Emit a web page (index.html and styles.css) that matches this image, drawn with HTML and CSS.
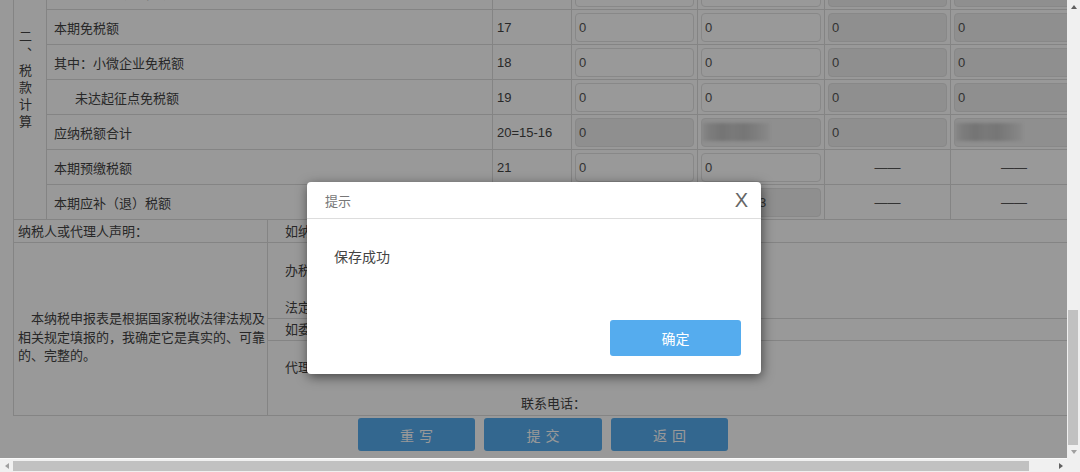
FILE: index.html
```html
<!DOCTYPE html>
<html lang="zh-CN">
<head>
<meta charset="utf-8">
<title>增值税纳税申报表</title>
<link rel="stylesheet" href="styles.css">
</head>
<body>
<div class="window">
  <div class="viewport">
    <div class="page">
      <table class="calc">
        <colgroup>
          <col class="c-sec"><col class="c-item"><col class="c-no"><col class="c-v"><col class="c-v2"><col class="c-v"><col class="c-v2">
        </colgroup>
        <tr>
          <td class="sec" rowspan="8"><div class="vtext">二、税款计算</div></td>
          <td class="item">本期应纳税额</td><td class="no">15</td>
          <td><div class="field">0</div></td><td><div class="field">0</div></td><td><div class="field ro">0</div></td><td><div class="field ro">0</div></td>
        </tr>
        <tr>
          <td class="item">本期应纳税额减征额</td><td class="no">16</td>
          <td><div class="field">0</div></td><td><div class="field">0</div></td><td><div class="field ro">0</div></td><td><div class="field ro">0</div></td>
        </tr>
        <tr>
          <td class="item">本期免税额</td><td class="no">17</td>
          <td><div class="field">0</div></td><td><div class="field">0</div></td><td><div class="field ro">0</div></td><td><div class="field ro">0</div></td>
        </tr>
        <tr>
          <td class="item">其中<span class="c">：</span>小微企业免税额</td><td class="no">18</td>
          <td><div class="field">0</div></td><td><div class="field">0</div></td><td><div class="field ro">0</div></td><td><div class="field ro">0</div></td>
        </tr>
        <tr>
          <td class="item sub">未达起征点免税额</td><td class="no">19</td>
          <td><div class="field">0</div></td><td><div class="field">0</div></td><td><div class="field ro">0</div></td><td><div class="field ro">0</div></td>
        </tr>
        <tr>
          <td class="item">应纳税额合计</td><td class="no">20=15-16</td>
          <td><div class="field ro">0</div></td><td><div class="field ro blur"><span class="mosaic"></span></div></td><td><div class="field ro">0</div></td><td><div class="field ro blur"><span class="mosaic"></span></div></td>
        </tr>
        <tr>
          <td class="item">本期预缴税额</td><td class="no">21</td>
          <td><div class="field">0</div></td><td><div class="field">0</div></td><td class="dash">——</td><td class="dash">——</td>
        </tr>
        <tr>
          <td class="item">本期应补<span class="c">（</span>退<span class="c">）</span>税额</td><td class="no">22=20-21</td>
          <td><div class="field ro">0</div></td><td><div class="field ro blur"><span class="mosaic short"></span>3</div></td><td class="dash">——</td><td class="dash">——</td>
        </tr>
      </table>

      <table class="decl">
        <colgroup><col class="d-left"><col class="d-right"></colgroup>
        <tr class="d-head first">
          <td>纳税人或代理人声明<span class="c">：</span></td>
          <td class="right">如纳税人填报，由纳税人填写以下各栏<span class="c">：</span></td>
        </tr>
        <tr class="d-sign">
          <td class="stmt" rowspan="3"><p>本纳税申报表是根据国家税收法律法规及相关规定填报的，我确定它是真实的、可靠的、完整的。</p></td>
          <td class="right sign"><p>办税人员<span class="c">：</span></p><p class="second">法定代表人<span class="c">：</span></p></td>
        </tr>
        <tr class="d-head">
          <td class="right">如委托代理人填报，由代理人填写以下各栏<span class="c">：</span></td>
        </tr>
        <tr class="d-sign">
          <td class="right agent"><p>代理人名称<span class="c">（</span>公章<span class="c">）：</span></p><p class="phone">联系电话<span class="c">：</span></p></td>
        </tr>
      </table>

      <div class="actions">
        <button class="btn" type="button">重写</button>
        <button class="btn" type="button">提交</button>
        <button class="btn" type="button">返回</button>
      </div>
    </div>

    <div class="mask"></div>
    <div class="dialog">
      <div class="dlg-head">
        <span class="dlg-title">提示</span>
        <span class="dlg-close">X</span>
      </div>
      <div class="dlg-body">保存成功</div>
      <div class="dlg-foot"><button class="dlg-ok" type="button">确定</button></div>
    </div>
  </div>

  <div class="vbar">
    <div class="sb-btn"><span class="arr up"></span></div>
    <div class="vtrack"><div class="vthumb"></div></div>
    <div class="sb-btn"><span class="arr down"></span></div>
  </div>

  <div class="hbar">
    <div class="sb-btn"><span class="arr left"></span></div>
    <div class="htrack"><div class="hthumb"></div></div>
    <div class="sb-btn"><span class="arr right"></span></div>
  </div>
  <div class="corner"></div>
</div>
</body>
</html>
```

FILE: styles.css
```css
* { box-sizing: border-box; }
html, body { margin: 0; padding: 0; }
body {
  font-family: "Liberation Sans", "Noto Sans CJK SC", sans-serif;
  font-size: 13px;
  color: #444;
  background: #fff;
}
/* full-width punctuation centred in its em box, as in the original UI font */
.c { font-family: "Noto Sans CJK JP", "Noto Sans CJK SC", sans-serif; }

.window {
  display: grid;
  grid-template-columns: 1067px 13px;
  grid-template-rows: 458px 14px;
  width: 1080px;
  height: 472px;
  overflow: hidden;
}

.viewport {
  position: relative;
  overflow: hidden;
  background: #fff;
}

.page {
  padding-left: 13px;
  width: 1093px;
}

table {
  border-collapse: collapse;
  table-layout: fixed;
  width: 1064px;
}
td {
  border: 1px solid #ddd;
  padding: 0;
  vertical-align: middle;
}

/* upper table (scrolled: its first rows lie above the viewport) */
.calc { margin-top: -61px; }
.c-sec { width: 33px; }
.c-item { width: 446px; }
.c-no { width: 79px; }
.c-v { width: 126px; }
.c-v2 { width: 127px; }

.calc td { height: 35px; }
.calc .item { padding-left: 7px; }
.calc .item.sub { padding-left: 28px; }
.calc .no { padding-left: 4px; }

.sec { padding: 3px 0 0 3px; }
.vtext {
  writing-mode: vertical-rl;
  line-height: 14px;
  letter-spacing: 4px;
  font-size: 13px;
}

.field {
  height: 29px;
  margin: 0 3px;
  border: 1px solid #e3e3e3;
  border-radius: 4px;
  background: #fff;
  padding: 0 3px;
  line-height: 27px;
  color: #555;
  font-size: 13px;
  white-space: nowrap;
  overflow: hidden;
}
.field.ro { background: #eee; }
.field.blur { padding-left: 0; display: flex; align-items: center; }

.mosaic {
  display: inline-block;
  width: 68px;
  height: 18px;
  background: linear-gradient(90deg, #e2e2e2 0, #cfcfcf 12%, #c2c2c2 30%, #cbcbcb 45%, #c4c4c4 62%, #d2d2d2 80%, #e6e6e6 100%);
  filter: blur(1.5px);
}
.mosaic.short { width: 56px; margin-right: 1px; }

.dash { text-align: center; color: #555; }

/* declaration table */
.decl { margin-top: -1px; }
.d-left { width: 254px; }
.d-right { width: 810px; }
.decl td { vertical-align: top; }
.decl .d-head td { height: 22px; line-height: 20px; padding-left: 4px; vertical-align: middle; }
.decl .d-head.first td { height: 23px; }
.decl .d-head td.right { padding-left: 17px; }
.decl .right { padding-left: 17px; }
.decl p { margin: 0; }

.stmt { padding: 67px 1px 0 4px; }
.stmt p { line-height: 18.5px; text-indent: 1em; }

.d-sign td.sign, .d-sign td.agent { height: 75px; }
.sign { padding-top: 17px; }
.sign p { line-height: 20px; }
.sign .second { margin-top: 16px; }
.agent { padding-top: 16px; }
.agent p { line-height: 20px; }
.agent .phone { margin-top: 15px; padding-left: 236px; }

/* action buttons */
.actions {
  width: 1060px;
  display: flex;
  justify-content: center;
  gap: 9px;
  padding-top: 2px;
}
.btn {
  width: 117px;
  height: 33px;
  border: 0;
  border-radius: 3px;
  background: #55acee;
  color: #fff;
  font-family: "Liberation Sans", "Noto Sans CJK SC", sans-serif;
  font-size: 14px;
  letter-spacing: 5px;
  padding: 0 0 0 5px;
}
.btn:nth-child(2) { width: 118px; }

/* modal */
.mask {
  position: absolute;
  inset: 0;
  background: rgba(0, 0, 0, 0.4);
}
.dialog {
  position: absolute;
  left: 307px;
  top: 182px;
  width: 454px;
  height: 192px;
  background: #fff;
  border-radius: 4px;
  box-shadow: 1px 3px 12px rgba(0, 0, 0, 0.55);
  display: flex;
  flex-direction: column;
}
.dlg-head {
  height: 37px;
  border-bottom: 1px solid #ddd;
  display: flex;
  align-items: center;
  justify-content: space-between;
  padding: 0 13px 0 18px;
}
.dlg-title { font-size: 13px; color: #777; }
.dlg-close { font-size: 20px; color: #666; line-height: 20px; }
.dlg-body {
  flex: 1;
  padding: 28px 27px 0;
  font-size: 14px;
  line-height: 20px;
  color: #444;
}
.dlg-foot {
  display: flex;
  justify-content: flex-end;
  padding: 0 20px 18px;
}
.dlg-ok {
  width: 131px;
  height: 36px;
  border: 0;
  border-radius: 3px;
  background: #55acee;
  color: #fff;
  font-family: "Liberation Sans", "Noto Sans CJK SC", sans-serif;
  font-size: 14px;
}

/* scrollbars */
.vbar {
  background: #f0f0f0;
  display: flex;
  flex-direction: column;
}
.vbar .sb-btn { height: 13px; display: flex; align-items: center; justify-content: center; }
.vbar .sb-btn:first-child { height: 14px; }
.vtrack { flex: 1; display: flex; flex-direction: column; justify-content: flex-end; }
.vthumb { height: 135px; margin: 0 2px 0 1px; background: #c1c1c1; }

.hbar {
  background: #f0f0f0;
  border-top: 1px solid #fafafa;
  display: flex;
}
.hbar .sb-btn { width: 13px; display: flex; align-items: center; justify-content: center; }
.htrack { flex: 1; display: flex; align-items: center; }
.hthumb { width: 1016px; height: 10px; background: #c1c1c1; }
.corner { background: #f0f0f0; }

.arr { width: 0; height: 0; border: 3px solid transparent; }
.arr.up { border-bottom: 4px solid #606060; border-top-width: 0; }
.arr.down { border-top: 4px solid #a0a0a0; border-bottom-width: 0; }
.arr.left { border-right: 4px solid #a0a0a0; border-left-width: 0; }
.arr.right { border-left: 4px solid #606060; border-right-width: 0; }
```
